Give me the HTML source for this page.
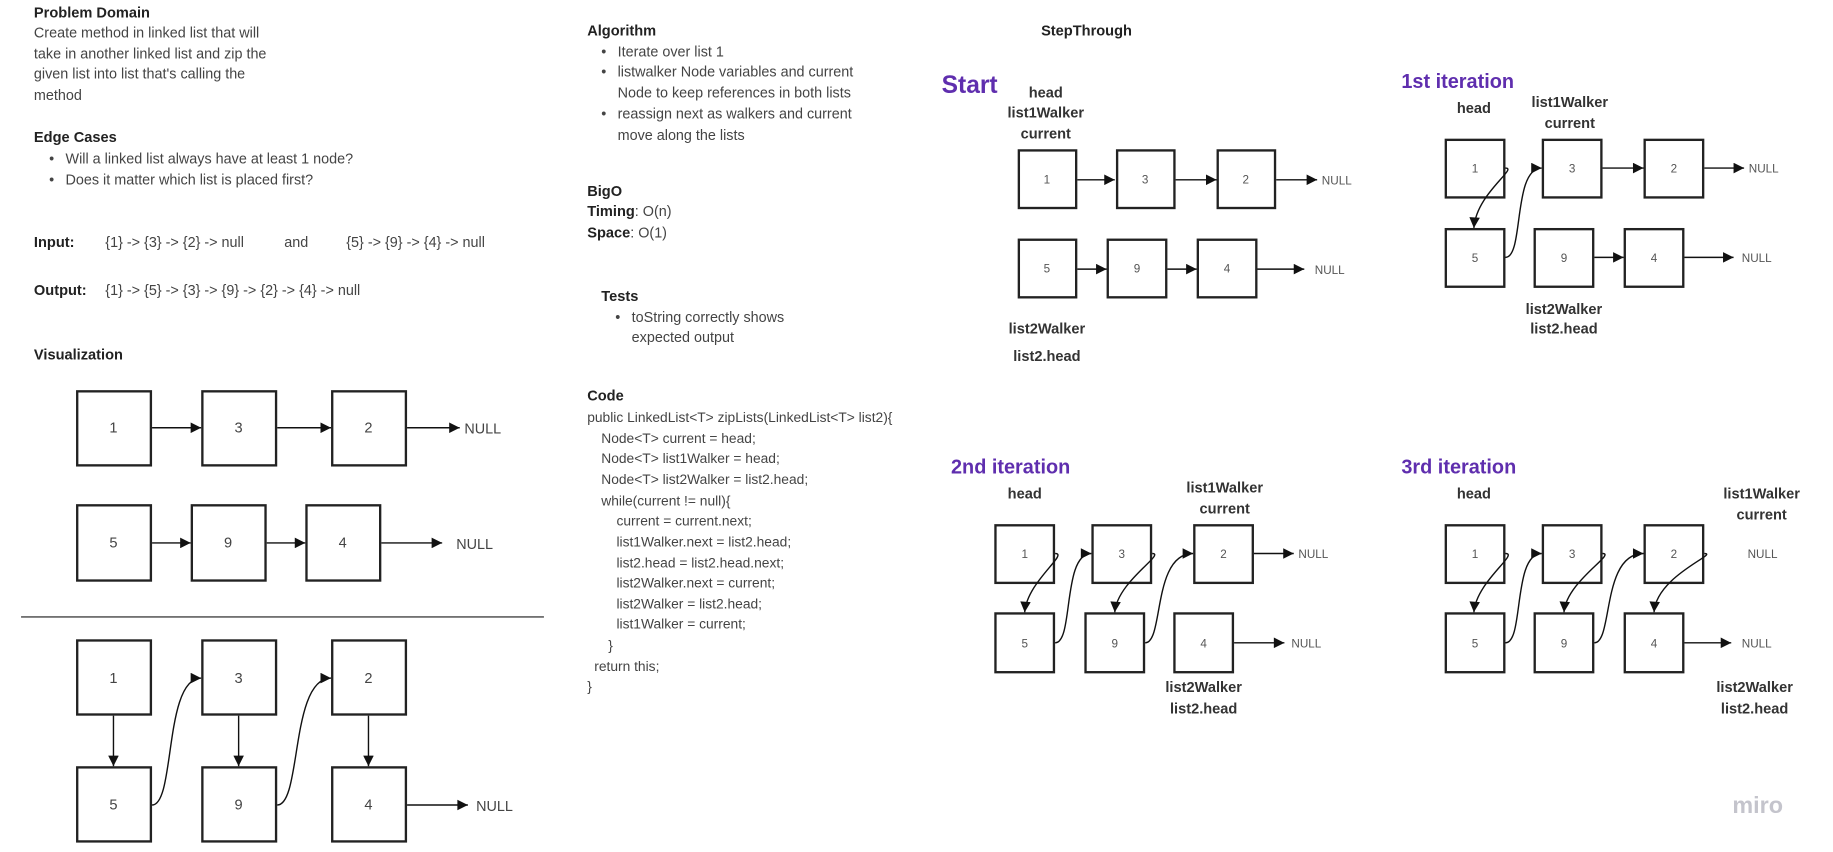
<!DOCTYPE html>
<html><head><meta charset="utf-8"><style>
html,body{margin:0;padding:0;background:#fff;width:1833px;height:852px;overflow:hidden}
svg{display:block}
text{font-family:"Liberation Sans",sans-serif;fill:#444}
.h{font-weight:bold;fill:#222;font-size:12.5px}
.t{font-size:12.3px}
.c{font-size:11.8px}
.lb{font-weight:bold;fill:#333;font-size:12.5px;text-anchor:middle}
.p{font-weight:bold;fill:#5f2eae}
.n{font-size:10px;text-anchor:middle;fill:#555}
.N{font-size:12.5px;text-anchor:middle;fill:#444}
.nl{font-size:10px;fill:#555}
.b{fill:#fff;stroke:#222;stroke-width:2}
.a{stroke:#111;stroke-width:1.2;fill:none}
</style></head><body>
<svg width="1833" height="852" viewBox="0 0 1567 725" preserveAspectRatio="none" xmlns="http://www.w3.org/2000/svg">
<defs>
<marker id="m" viewBox="0 0 10 10" refX="10" refY="5" markerWidth="11" markerHeight="9" markerUnits="userSpaceOnUse" orient="auto"><path d="M0,0 L10,5 L0,10 z" fill="#111"/></marker>
</defs>
<text class="h" x="29" y="15">Problem Domain</text>
<text class="t" x="29" y="32">Create method in linked list that will</text>
<text class="t" x="29" y="50">take in another linked list and zip the</text>
<text class="t" x="29" y="67">given list into list that's calling the</text>
<text class="t" x="29" y="85">method</text>
<text class="h" x="29" y="121">Edge Cases</text>
<text class="t" x="42" y="139">•</text><text class="t" x="56" y="139">Will a linked list always have at least 1 node?</text>
<text class="t" x="42" y="157">•</text><text class="t" x="56" y="157">Does it matter which list is placed first?</text>
<text class="h" x="29" y="210">Input:</text>
<text class="t" x="90" y="210">{1} -&gt; {3} -&gt; {2} -&gt; null</text>
<text class="t" x="243" y="210">and</text>
<text class="t" x="296" y="210">{5} -&gt; {9} -&gt; {4} -&gt; null</text>
<text class="h" x="29" y="251">Output:</text>
<text class="t" x="90" y="251">{1} -&gt; {5} -&gt; {3} -&gt; {9} -&gt; {2} -&gt; {4} -&gt; null</text>
<text class="h" x="29" y="306">Visualization</text>

<g>
<rect class="b" x="66" y="333" width="63" height="63"/><text class="N" x="97" y="368">1</text>
<rect class="b" x="173" y="333" width="63" height="63"/><text class="N" x="204" y="368">3</text>
<rect class="b" x="284" y="333" width="63" height="63"/><text class="N" x="315" y="368">2</text>
<line class="a" x1="130" y1="364" x2="172" y2="364" marker-end="url(#m)"/>
<line class="a" x1="237" y1="364" x2="283" y2="364" marker-end="url(#m)"/>
<line class="a" x1="348" y1="364" x2="393" y2="364" marker-end="url(#m)"/>
<text class="t" x="397" y="369">NULL</text>
<rect class="b" x="66" y="430" width="63" height="64"/><text class="N" x="97" y="466">5</text>
<rect class="b" x="164" y="430" width="63" height="64"/><text class="N" x="195" y="466">9</text>
<rect class="b" x="262" y="430" width="63" height="64"/><text class="N" x="293" y="466">4</text>
<line class="a" x1="130" y1="462" x2="163" y2="462" marker-end="url(#m)"/>
<line class="a" x1="228" y1="462" x2="261" y2="462" marker-end="url(#m)"/>
<line class="a" x1="326" y1="462" x2="378" y2="462" marker-end="url(#m)"/>
<text class="t" x="390" y="467">NULL</text>
<line x1="18" y1="525" x2="465" y2="525" stroke="#444" stroke-width="1.2"/>
<rect class="b" x="66" y="545" width="63" height="63"/><text class="N" x="97" y="581">1</text>
<rect class="b" x="173" y="545" width="63" height="63"/><text class="N" x="204" y="581">3</text>
<rect class="b" x="284" y="545" width="63" height="63"/><text class="N" x="315" y="581">2</text>
<rect class="b" x="66" y="653" width="63" height="63"/><text class="N" x="97" y="689">5</text>
<rect class="b" x="173" y="653" width="63" height="63"/><text class="N" x="204" y="689">9</text>
<rect class="b" x="284" y="653" width="63" height="63"/><text class="N" x="315" y="689">4</text>
<line class="a" x1="97" y1="609" x2="97" y2="652" marker-end="url(#m)"/>
<line class="a" x1="204" y1="609" x2="204" y2="652" marker-end="url(#m)"/>
<line class="a" x1="315" y1="609" x2="315" y2="652" marker-end="url(#m)"/>
<path class="a" d="M130 685 C150 685 140 577 172 577" marker-end="url(#m)"/>
<path class="a" d="M237 685 C258 685 248 577 283 577" marker-end="url(#m)"/>
<line class="a" x1="348" y1="685" x2="400" y2="685" marker-end="url(#m)"/>
<text class="t" x="407" y="690">NULL</text>
</g>

<text class="h" x="502" y="30">Algorithm</text>
<text class="t" x="514" y="48">•</text><text class="t" x="528" y="48">Iterate over list 1</text>
<text class="t" x="514" y="65">•</text><text class="t" x="528" y="65">listwalker Node variables and current</text>
<text class="t" x="528" y="83">Node  to keep references in both lists</text>
<text class="t" x="514" y="101">•</text><text class="t" x="528" y="101">reassign next as walkers and current</text>
<text class="t" x="528" y="119">move along the lists</text>
<text class="h" x="502" y="167">BigO</text>
<text class="t" x="502" y="184"><tspan class="h">Timing</tspan>: O(n)</text>
<text class="t" x="502" y="202"><tspan class="h">Space</tspan>: O(1)</text>
<text class="h" x="514" y="256">Tests</text>
<text class="t" x="526" y="274">•</text><text class="t" x="540" y="274">toString correctly shows</text>
<text class="t" x="540" y="291">expected output</text>
<text class="h" x="502" y="341">Code</text>
<text class="c" x="502" y="359">public LinkedList&lt;T&gt; zipLists(LinkedList&lt;T&gt; list2){</text>
<text class="c" x="514" y="377">Node&lt;T&gt; current = head;</text>
<text class="c" x="514" y="394">Node&lt;T&gt; list1Walker = head;</text>
<text class="c" x="514" y="412">Node&lt;T&gt; list2Walker = list2.head;</text>
<text class="c" x="514" y="430">while(current != null){</text>
<text class="c" x="527" y="447">current = current.next;</text>
<text class="c" x="527" y="465">list1Walker.next = list2.head;</text>
<text class="c" x="527" y="483">list2.head = list2.head.next;</text>
<text class="c" x="527" y="500">list2Walker.next = current;</text>
<text class="c" x="527" y="518">list2Walker = list2.head;</text>
<text class="c" x="527" y="535">list1Walker = current;</text>
<text class="c" x="520" y="553">}</text>
<text class="c" x="508" y="571">return this;</text>
<text class="c" x="502" y="588">}</text>

<text class="h" x="890" y="30">StepThrough</text>
<text class="p" x="805" y="79" font-size="21">Start</text>
<text class="lb" x="894" y="83">head</text>
<text class="lb" x="894" y="100">list1Walker</text>
<text class="lb" x="894" y="118">current</text>
<rect class="b" x="871" y="128" width="49" height="49"/><text class="n" x="895" y="156">1</text>
<rect class="b" x="955" y="128" width="49" height="49"/><text class="n" x="979" y="156">3</text>
<rect class="b" x="1041" y="128" width="49" height="49"/><text class="n" x="1065" y="156">2</text>
<line class="a" x1="921" y1="153" x2="953" y2="153" marker-end="url(#m)"/>
<line class="a" x1="1005" y1="153" x2="1040" y2="153" marker-end="url(#m)"/>
<line class="a" x1="1091" y1="153" x2="1126" y2="153" marker-end="url(#m)"/>
<text class="nl" x="1130" y="157">NULL</text>
<rect class="b" x="871" y="204" width="49" height="49"/><text class="n" x="895" y="232">5</text>
<rect class="b" x="947" y="204" width="50" height="49"/><text class="n" x="972" y="232">9</text>
<rect class="b" x="1024" y="204" width="50" height="49"/><text class="n" x="1049" y="232">4</text>
<line class="a" x1="921" y1="229" x2="946" y2="229" marker-end="url(#m)"/>
<line class="a" x1="998" y1="229" x2="1023" y2="229" marker-end="url(#m)"/>
<line class="a" x1="1075" y1="229" x2="1115" y2="229" marker-end="url(#m)"/>
<text class="nl" x="1124" y="233">NULL</text>
<text class="lb" x="895" y="284">list2Walker</text>
<text class="lb" x="895" y="307">list2.head</text>

<text class="p" x="1198" y="75" font-size="17">1st iteration</text>
<text class="lb" x="1260" y="96">head</text>
<text class="lb" x="1342" y="91">list1Walker</text>
<text class="lb" x="1342" y="109">current</text>
<rect class="b" x="1236" y="119" width="50" height="49"/><text class="n" x="1261" y="147">1</text>
<rect class="b" x="1319" y="119" width="50" height="49"/><text class="n" x="1344" y="147">3</text>
<rect class="b" x="1406" y="119" width="50" height="49"/><text class="n" x="1431" y="147">2</text>
<line class="a" x1="1370" y1="143" x2="1405" y2="143" marker-end="url(#m)"/>
<line class="a" x1="1457" y1="143" x2="1491" y2="143" marker-end="url(#m)"/>
<text class="nl" x="1495" y="147">NULL</text>
<rect class="b" x="1236" y="195" width="50" height="49"/><text class="n" x="1261" y="223">5</text>
<rect class="b" x="1312" y="195" width="50" height="49"/><text class="n" x="1337" y="223">9</text>
<rect class="b" x="1389" y="195" width="50" height="49"/><text class="n" x="1414" y="223">4</text>
<line class="a" x1="1363" y1="219" x2="1388" y2="219" marker-end="url(#m)"/>
<line class="a" x1="1440" y1="219" x2="1482" y2="219" marker-end="url(#m)"/>
<text class="nl" x="1489" y="223">NULL</text>
<path class="a" d="M1287 143 C1298 143 1262 165 1260 194" marker-end="url(#m)"/>
<path class="a" d="M1287 219 C1303 219 1293 143 1318 143" marker-end="url(#m)"/>
<text class="lb" x="1337" y="267">list2Walker</text>
<text class="lb" x="1337" y="284">list2.head</text>

<text class="p" x="813" y="403" font-size="17">2nd iteration</text>
<text class="lb" x="876" y="424">head</text>
<text class="lb" x="1047" y="419">list1Walker</text>
<text class="lb" x="1047" y="437">current</text>
<rect class="b" x="851" y="447" width="50" height="49"/><text class="n" x="876" y="475">1</text>
<rect class="b" x="934" y="447" width="50" height="49"/><text class="n" x="959" y="475">3</text>
<rect class="b" x="1021" y="447" width="50" height="49"/><text class="n" x="1046" y="475">2</text>
<line class="a" x1="1072" y1="471" x2="1106" y2="471" marker-end="url(#m)"/>
<text class="nl" x="1110" y="475">NULL</text>
<rect class="b" x="851" y="522" width="50" height="50"/><text class="n" x="876" y="551">5</text>
<rect class="b" x="928" y="522" width="50" height="50"/><text class="n" x="953" y="551">9</text>
<rect class="b" x="1004" y="522" width="50" height="50"/><text class="n" x="1029" y="551">4</text>
<line class="a" x1="1055" y1="547" x2="1098" y2="547" marker-end="url(#m)"/>
<text class="nl" x="1104" y="551">NULL</text>
<path class="a" d="M902 471 C914 471 878 495 876 521" marker-end="url(#m)"/>
<path class="a" d="M902 547 C918 547 908 471 933 471" marker-end="url(#m)"/>
<path class="a" d="M985 471 C997 471 955 495 953 521" marker-end="url(#m)"/>
<path class="a" d="M979 547 C995 547 985 471 1020 471" marker-end="url(#m)"/>
<text class="lb" x="1029" y="589">list2Walker</text>
<text class="lb" x="1029" y="607">list2.head</text>

<text class="p" x="1198" y="403" font-size="17">3rd iteration</text>
<text class="lb" x="1260" y="424">head</text>
<text class="lb" x="1506" y="424">list1Walker</text>
<text class="lb" x="1506" y="442">current</text>
<rect class="b" x="1236" y="447" width="50" height="49"/><text class="n" x="1261" y="475">1</text>
<rect class="b" x="1319" y="447" width="50" height="49"/><text class="n" x="1344" y="475">3</text>
<rect class="b" x="1406" y="447" width="50" height="49"/><text class="n" x="1431" y="475">2</text>
<text class="nl" x="1494" y="475">NULL</text>
<rect class="b" x="1236" y="522" width="50" height="50"/><text class="n" x="1261" y="551">5</text>
<rect class="b" x="1312" y="522" width="50" height="50"/><text class="n" x="1337" y="551">9</text>
<rect class="b" x="1389" y="522" width="50" height="50"/><text class="n" x="1414" y="551">4</text>
<line class="a" x1="1440" y1="547" x2="1480" y2="547" marker-end="url(#m)"/>
<text class="nl" x="1489" y="551">NULL</text>
<path class="a" d="M1287 471 C1299 471 1262 495 1260 521" marker-end="url(#m)"/>
<path class="a" d="M1287 547 C1303 547 1293 471 1318 471" marker-end="url(#m)"/>
<path class="a" d="M1370 471 C1382 471 1339 495 1337 521" marker-end="url(#m)"/>
<path class="a" d="M1363 547 C1379 547 1369 471 1405 471" marker-end="url(#m)"/>
<path class="a" d="M1457 471 C1470 471 1416 490 1414 521" marker-end="url(#m)"/>
<text class="lb" x="1500" y="589">list2Walker</text>
<text class="lb" x="1500" y="607">list2.head</text>

<text x="1481" y="692" font-size="20" font-weight="bold" style="fill:#c4c4cc">miro</text>
</svg>
</body></html>
